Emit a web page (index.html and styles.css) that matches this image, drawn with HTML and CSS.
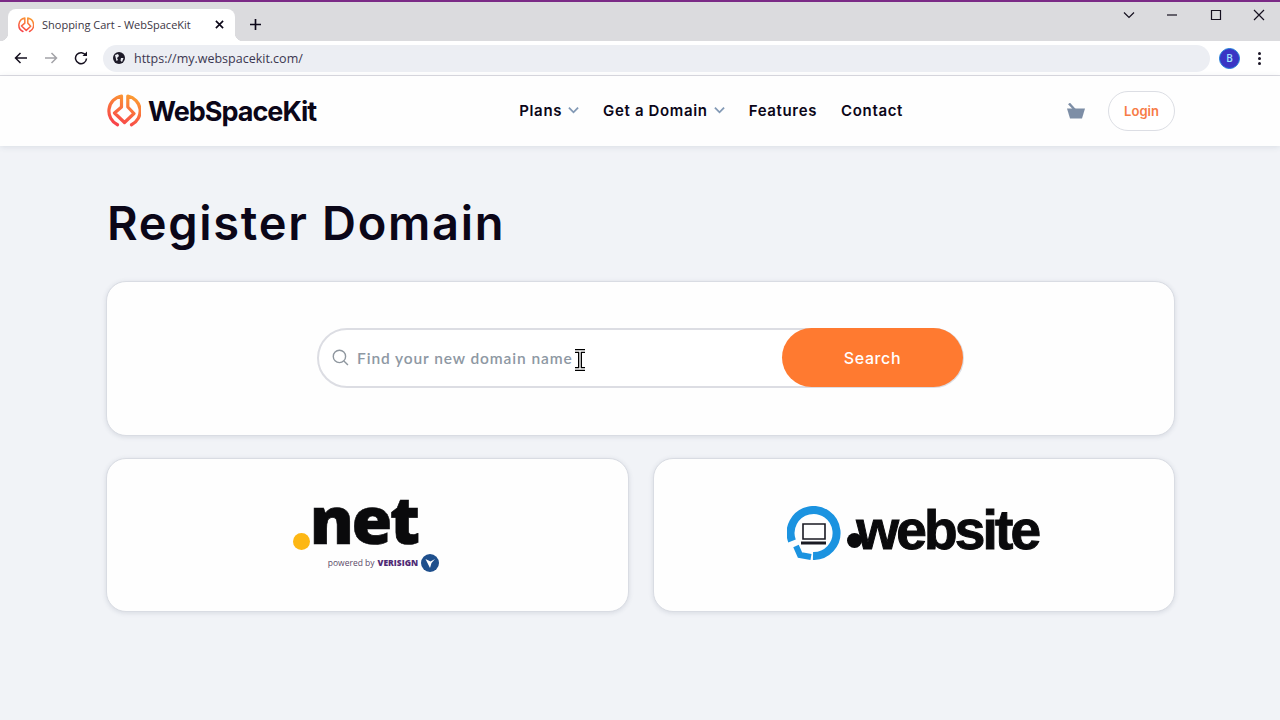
FILE: index.html
```html
<!DOCTYPE html>
<html>
<head>
	<title>Shopping Cart - WebSpaceKit</title>
	<link rel="stylesheet" href="styles.css">
</head>
<body>
	<svg class="defs" width="0" height="0">
		<defs>
			<linearGradient id="logoGrad" x1="0.3" y1="1" x2="0.7" y2="0">
				<stop offset="0" stop-color="#f8434a"/>
				<stop offset="1" stop-color="#fb9a33"/>
			</linearGradient>
			<symbol id="logoMark" viewBox="0 0 34 34">
				<g fill="none" stroke="url(#logoGrad)" stroke-width="3.2" stroke-linecap="round" stroke-linejoin="round">
					<path d="M10.500 30.800A15.300 15.300 0 0 1 14.500 2V13L7.500 19L17.500 28.500L27 19.500L20.800 13V2A15.300 15.300 0 0 1 24.500 30.800"/>
				</g>
			</symbol>
		</defs>
	</svg>

	<div class="tabstrip">
		<div class="tab">
			<svg class="favicon"><use href="#logoMark"/></svg>
			<span class="tab-title">Shopping Cart - WebSpaceKit</span>
			<svg class="tab-close" viewBox="0 0 10 10"><path d="M1 1L9 9M9 1L1 9"/></svg>
		</div>
		<svg class="new-tab" viewBox="0 0 12 12"><path d="M6 0V12M0 6H12"/></svg>
		<div class="win-btns">
			<svg class="win-icon" viewBox="0 0 12 12"><path d="M1 3.500L6 8.500L11 3.500"/></svg>
			<svg class="win-icon" viewBox="0 0 12 12"><path d="M1 6H11"/></svg>
			<svg class="win-icon" viewBox="0 0 12 12"><path d="M1.500 1.500H10.500V10.500H1.500Z"/></svg>
			<svg class="win-icon" viewBox="0 0 12 12"><path d="M1 1L11 11M11 1L1 11"/></svg>
		</div>
	</div>

	<div class="toolbar">
		<svg class="nav-icon" viewBox="0 0 14 14"><path d="M13 7H1.500M6.500 2L1.500 7L6.500 12"/></svg>
		<svg class="nav-icon nav-off" viewBox="0 0 14 14"><path d="M1 7H12.500M7.500 2L12.500 7L7.500 12"/></svg>
		<svg class="nav-icon" viewBox="0 0 14 14"><path d="M11.800 4.500A5.500 5.500 0 1 0 12.500 7.500"/><path class="solid" d="M8.500 5H13V0.500Z"/></svg>
		<div class="omnibox">
			<svg class="globe" viewBox="0 0 12 12"><circle cx="6" cy="6" r="6"/><path d="M2 3L5 2L6 4L4 6L5 8L3.500 9ZM8 6H10.500L9 10L7.500 8.500Z"/></svg>
			<span class="url">https://my.webspacekit.com/</span>
		</div>
		<div class="avatar">B</div>
		<div class="kebab"><i></i><i></i><i></i></div>
	</div>

	<header class="site-header">
		<div class="container header-row">
			<a class="brand">
				<svg class="brand-mark"><use href="#logoMark"/></svg>
				<span class="brand-name">WebSpaceKit</span>
			</a>
			<nav class="main-nav">
				<a>Plans <svg class="caret" viewBox="0 0 12 8"><path d="M1 1.500L6 6.500L11 1.500"/></svg></a>
				<a>Get a Domain <svg class="caret" viewBox="0 0 12 8"><path d="M1 1.500L6 6.500L11 1.500"/></svg></a>
				<a>Features</a>
				<a>Contact</a>
			</nav>
			<div class="header-actions">
				<svg class="basket" viewBox="0 0 18 16"><path d="M0 5.500H18L15 15.500H3Z"/><path d="M8 7L2 0.500" class="handle"/></svg>
				<a class="login">Login</a>
			</div>
		</div>
	</header>

	<main class="container">
		<h1>Register Domain</h1>
		<section class="card search-card">
			<form class="search-bar">
				<svg class="search-icon" viewBox="0 0 16 16"><circle cx="7" cy="7" r="5.800"/><path d="M11.200 11.200L15 15"/></svg>
				<span class="placeholder">Find your new domain name</span>
				<button class="search-btn" type="button">Search</button>
			</form>
		</section>
		<section class="tld-grid">
			<div class="card tld-card">
				<div class="net-logo">
					<div class="net-word"><i class="net-dot"></i><span>net</span></div>
					<div class="net-sub">powered by <b>VERISIGN</b>
						<svg class="vs-mark" viewBox="0 0 18 18"><circle cx="9" cy="9" r="9"/><path d="M4.500 5L9 14L10.500 9L14 5L9.500 7.500Z"/></svg>
					</div>
				</div>
			</div>
			<div class="card tld-card">
				<div class="website-logo">
					<svg class="website-mark" viewBox="0 0 54 54">
						<path class="ring" d="M26 50A23 23 0 1 0 5 35"/>
						<path class="ring-tail" d="M9 40L13 49L24 51"/>
						<path class="laptop" d="M16 18H38V33H16Z"/>
						<path class="laptop-base" d="M14 37H39"/>
					</svg>
					<span class="website-word"><i class="website-dot"></i>website</span>
				</div>
			</div>
		</section>
	</main>

	<svg class="ibeam" viewBox="0 0 14 22">
		<path class="ibeam-out" d="M2 2H12M2 20H12M7 2V20"/>
		<path class="ibeam-in" d="M2 2H12M2 20H12M7 2V20"/>
	</svg>
</body>
</html>
```

FILE: styles.css
```css
* {
	box-sizing: border-box;
}

body {
	margin: 0;
	height: 720px;
	overflow: hidden;
	position: relative;
	background-color: #f1f3f7;
	font-family: "Inter", "Liberation Sans", sans-serif;
	color: #0b0618;
}

.defs {
	position: absolute;
}

/* browser chrome */
.tabstrip {
	height: 41px;
	padding: 7px 0 0 8px;
	display: flex;
	background-color: #dbdbde;
	border-top: 2px solid #7b2a86;
}

.tab {
	position: relative;
	width: 227px;
	height: 32px;
	display: flex;
	align-items: center;
	padding: 0 10px;
	background-color: #fff;
	border-radius: 8px 8px 0 0;
}

.tab::before,
.tab::after {
	content: "";
	position: absolute;
	bottom: 0;
	width: 8px;
	height: 8px;
}

.tab::before {
	left: -8px;
	background: radial-gradient(circle at 0 0, transparent 8px, #fff 8.5px);
}

.tab::after {
	right: -8px;
	background: radial-gradient(circle at 100% 0, transparent 8px, #fff 8.5px);
}

.favicon {
	width: 16px;
	height: 16px;
	flex: none;
}

.tab-title {
	margin-left: 8px;
	margin-bottom: 2px;
	font: 11px "Open Sans", sans-serif;
	color: #3c3644;
	white-space: nowrap;
}

.tab-close {
	width: 9px;
	height: 9px;
	margin-left: auto;
	margin-right: 1px;
	margin-bottom: 1px;
}

.tab-close path,
.new-tab path {
	fill: none;
	stroke: #0b0618;
	stroke-width: 1.800;
}

.new-tab {
	width: 11px;
	height: 11px;
	margin: 10px 0 0 15px;
}

.win-btns {
	margin-left: auto;
	display: flex;
	gap: 31.500px;
	padding-right: 15px;
}

.win-icon {
	width: 12px;
	height: 12px;
}

.win-icon path {
	fill: none;
	stroke: #15101f;
	stroke-width: 1.200;
}

.toolbar {
	height: 35px;
	display: flex;
	align-items: center;
	background-color: #fff;
	border-bottom: 1px solid #dcdce2;
	padding: 0 13px 0 14px;
}

.nav-icon {
	width: 14px;
	height: 14px;
	margin-right: 16px;
	flex: none;
}

.nav-icon path {
	fill: none;
	stroke: #15101f;
	stroke-width: 1.500;
}

.nav-icon .solid {
	fill: #15101f;
	stroke: none;
}

.nav-off path {
	stroke: #a3a3a8;
}

.omnibox {
	width: 1107px;
	height: 27px;
	margin-left: -1px;
	display: flex;
	align-items: center;
	padding-left: 10px;
	background-color: #eceef3;
	border-radius: 14px;
}

.globe {
	width: 12px;
	height: 12px;
	fill: #1d1a28;
}

.globe path {
	fill: #eceef3;
}

.url {
	margin-left: 9px;
	font: 12.500px "Open Sans", sans-serif;
	color: #3b3650;
}

.avatar {
	width: 21px;
	height: 21px;
	margin-left: 9px;
	border-radius: 50%;
	background-color: #3a35c4;
	border: 1px solid #1f7fd8;
	color: #9fe6ff;
	font: 600 10px/19px "Open Sans", sans-serif;
	text-align: center;
}

.kebab {
	margin-left: 18px;
	display: flex;
	flex-direction: column;
	gap: 2px;
}

.kebab i {
	width: 3px;
	height: 3px;
	background-color: #1a1526;
	border-radius: 50%;
}

/* site header */
.container {
	width: 1069px;
	margin-left: 106px;
}

.site-header {
	height: 70px;
	background-color: #fefefe;
	box-shadow: 0 1px 6px rgba(60, 70, 100, .12);
}

.header-row {
	height: 70px;
	padding-left: 1px;
	display: flex;
	align-items: center;
	position: relative;
}

.brand {
	display: flex;
	align-items: center;
	gap: 7px;
}

.brand-mark {
	width: 34px;
	height: 34px;
}

.brand-name {
	font-size: 27px;
	font-weight: 700;
	letter-spacing: -1px;
	color: #0b0618;
}

.main-nav {
	margin-left: 203px;
	padding-bottom: 2px;
	display: flex;
	gap: 24px;
	font-size: 15px;
	font-weight: 600;
	letter-spacing: .65px;
}

.main-nav a {
	display: flex;
	align-items: center;
	white-space: nowrap;
}

.caret {
	width: 11px;
	height: 8px;
	margin-left: 6px;
}

.caret path {
	fill: none;
	stroke: #8299b5;
	stroke-width: 2;
}

.header-actions {
	margin-left: auto;
	display: flex;
	align-items: center;
	gap: 23px;
}

.basket {
	width: 18px;
	height: 16px;
	fill: #7d8ea6;
}

.basket .handle {
	fill: none;
	stroke: #7d8ea6;
	stroke-width: 2.500;
}

.login {
	width: 67px;
	height: 40px;
	border: 1px solid #dcdee4;
	border-radius: 20px;
	font-size: 13px;
	font-weight: 600;
	line-height: 38px;
	text-align: center;
	color: #f77b45;
	background-color: #fff;
}

/* main */
h1 {
	margin: 46px 0 27px 1px;
	font-size: 47px;
	line-height: 62px;
	font-weight: 600;
	letter-spacing: 1.700px;
	color: #0b0618;
}

.card {
	background-color: #fefefe;
	border: 1px solid #d9dce3;
	border-radius: 20px;
	box-shadow: 0 1px 5px rgba(60, 70, 100, .14);
}

.search-card {
	height: 155px;
	padding-bottom: 2px;
	display: flex;
	justify-content: center;
	align-items: center;
}

.search-bar {
	width: 647px;
	height: 60px;
	margin: 0;
	display: flex;
	align-items: center;
	padding-left: 13px;
	border: 2px solid #dcdde3;
	border-radius: 30px;
	background-color: #fff;
}

.search-icon {
	width: 17px;
	height: 17px;
	flex: none;
}

.search-icon circle,
.search-icon path {
	fill: none;
	stroke: #8f979f;
	stroke-width: 1.300;
}

.placeholder {
	margin-left: 8px;
	font: 600 15.500px "Lato", sans-serif;
	letter-spacing: .9px;
	color: #8e98a3;
	white-space: nowrap;
}

.search-btn {
	width: 181px;
	height: 59px;
	margin-left: auto;
	margin-right: -1px;
	border: 0;
	border-radius: 30px;
	background-color: #ff7a30;
	color: #fff;
	font: 500 16px "Inter", sans-serif;
	letter-spacing: .6px;
}

.tld-grid {
	margin-top: 22px;
	display: grid;
	grid-template-columns: 1fr 1fr;
	gap: 24px;
}

.tld-card {
	height: 154px;
	display: flex;
	align-items: center;
	justify-content: center;
}

/* .net logo */
.net-logo {
	width: 150px;
	margin-left: 1px;
}

.net-word {
	display: flex;
	align-items: flex-end;
	height: 52px;
	font: 800 66px/52px "Open Sans", sans-serif;
	letter-spacing: -2.500px;
	-webkit-text-stroke: .6px #0a0a0c;
	color: #0a0a0c;
}

.net-word span {
	display: block;
	height: 52px;
	line-height: 39px;
}

.net-dot {
	width: 17px;
	height: 17px;
	margin-bottom: 1px;
	border-radius: 50%;
	background-color: #fdb714;
	flex: none;
}

.net-sub {
	margin: 3px 0 0 35px;
	display: flex;
	align-items: center;
	font: 8.500px "Open Sans", sans-serif;
	color: #5a4a68;
	white-space: nowrap;
}

.net-sub b {
	margin-left: 3px;
	font-weight: 800;
	color: #4f2a74;
}

.vs-mark {
	width: 18px;
	height: 18px;
	margin-left: 3px;
	fill: #1e4f8c;
}

.vs-mark path {
	fill: #fff;
}

/* .website logo */
.website-logo {
	display: flex;
	align-items: center;
	margin-top: -4px;
	padding-right: 2px;
}

.website-mark {
	width: 54px;
	height: 54px;
	flex: none;
}

.ring,
.ring-tail {
	fill: none;
	stroke: #1b93e0;
	stroke-width: 8;
}

.ring-tail {
	stroke-width: 6;
}

.laptop,
.laptop-base {
	fill: none;
	stroke: #1a1a22;
	stroke-width: 1.600;
}

.laptop-base {
	stroke-width: 3;
}

.website-word {
	display: flex;
	align-items: flex-end;
	margin-left: 6px;
	margin-bottom: 6px;
	font: 700 55px/50px "Liberation Sans", sans-serif;
	letter-spacing: -2.800px;
	-webkit-text-stroke: 1px #0a0a0c;
	color: #0a0a0c;
}

.website-dot {
	width: 15px;
	height: 15px;
	margin: 0 -6px 7px 0;
	border-radius: 50%;
	background-color: #0a0a0c;
	flex: none;
}

/* text cursor over the search bar */
.ibeam {
	position: absolute;
	left: 573px;
	top: 349px;
	width: 14px;
	height: 22px;
}

.ibeam path {
	fill: none;
}

.ibeam-out {
	stroke: #000;
	stroke-width: 4;
}

.ibeam-in {
	stroke: #fff;
	stroke-width: 1.400;
}
```
